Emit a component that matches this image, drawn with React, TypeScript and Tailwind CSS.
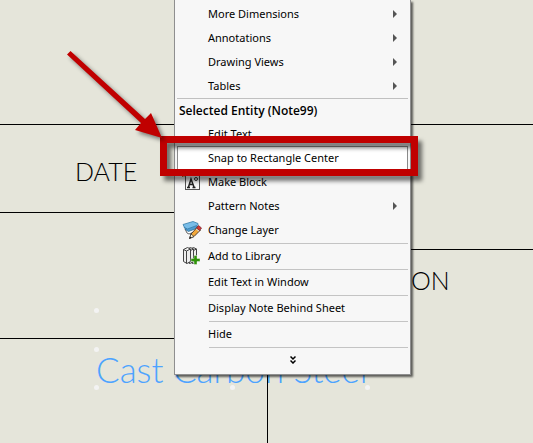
import type { ReactNode } from "react";

type Entry = {
  label: string;
  submenu?: boolean;
  icon?: ReactNode;
  divider?: boolean;
  active?: boolean;
};

const BlockIcon = () => (
  <svg width="20" height="20" viewBox="0 0 20 20" aria-hidden="true">
    <rect x="3.500" y="3.500" width="14" height="14" fill="#f7f7f7" stroke="#555" />
    <path d="M5 15.500h3M6.500 15L9 7L12 15M10.500 15.500h3M7.500 12.500h4" fill="none" stroke="#222" strokeWidth="1.500" />
    <circle cx="14" cy="7" r="1.500" fill="none" stroke="#333" />
    <path d="M0 1l2 2M5 1L3 3M0 5l2-2M2 0v5M0 3h5" stroke="#c06a28" />
  </svg>
);

const LayerIcon = () => (
  <svg width="20" height="20" viewBox="0 0 20 20" aria-hidden="true">
    <path d="M3 9L13 7.500L17 10L7 14L5 13Z" fill="#fff" stroke="#555" strokeWidth=".9" />
    <path d="M2 7L13 5L17 7.500L6.500 11.500L4 10Z" fill="#4d9bd0" stroke="#28678f" strokeWidth=".7" />
    <path d="M1 4.500L11 1.500L16 3.500L16 5L5.500 9L2.500 7.500Z" fill="#79bde8" stroke="#397da8" strokeWidth=".8" />
    <path d="M7.500 18.500L9 14L15 7.500L18.500 10L12 16.500Z" fill="#f2a83a" stroke="#3e302a" strokeWidth=".9" />
    <path d="M14.500 8L16.500 5.500L19.500 8L17.500 10.500Z" fill="#d63b30" stroke="#723" strokeWidth=".8" />
    <path d="M14 9L17 11" stroke="#ddd" />
    <path d="M7.500 18.500L9 14L12 16.500Z" fill="#fff1ce" stroke="#333" strokeWidth=".7" />
    <path d="M7.500 18.500L8.300 16.500L9.500 17.500Z" fill="#111" />
  </svg>
);

const LibraryIcon = () => (
  <svg width="20" height="20" viewBox="0 0 20 20" aria-hidden="true">
    {[7, 4, 1].map((x) => (
      <g key={x} transform={`translate(${x} 0)`}>
        <path d="M0.500 3.500L4.500 1.500L7.500 3V15.500L4 17.500L0.500 15.500Z" fill="#eee" stroke="#444" />
        <path d="M0.500 3.500L3.500 5L7.500 3M3.500 5V17.500" fill="none" stroke="#444" />
      </g>
    ))}
    <path d="M12 9.500H15V12.500H18V15.500H15V18.500H12V15.500H9V12.500H12Z" fill="#2f9209" stroke="#f7f7f7" strokeWidth=".4" />
  </svg>
);

const topEntries: Entry[] = [
  { label: "More Dimensions", submenu: true },
  { label: "Annotations", submenu: true },
  { label: "Drawing Views", submenu: true },
  { label: "Tables", submenu: true },
];

const entityEntries: Entry[] = [
  { label: "Edit Text" },
  { label: "Snap to Rectangle Center", active: true },
  { label: "Make Block", icon: <BlockIcon /> },
  { label: "Pattern Notes", submenu: true },
  { label: "Change Layer", icon: <LayerIcon />, divider: true },
  { label: "Add to Library", icon: <LibraryIcon />, divider: true },
  { label: "Edit Text in Window", divider: true },
  { label: "Display Note Behind Sheet", divider: true },
  { label: "Hide", divider: true },
];

function MenuItem({ label, submenu, icon, divider, active }: Entry) {
  return (
    <li>
      <button
        type="button"
        className={`flex h-6 w-full items-center pr-2.5 text-left ${
          active ? "border border-[#8a8a8a] bg-white" : "border border-transparent"
        }`}
      >
        <span className="flex w-[30px] shrink-0 justify-start pl-1">{icon}</span>
        <span className="grow whitespace-nowrap">{label}</span>
        {submenu && (
          <svg width="4" height="8" viewBox="0 0 4 8" aria-hidden="true">
            <path d="M0 0L4 4L0 8Z" fill="#555" />
          </svg>
        )}
      </button>
      {divider && <hr className="mt-px ml-8 border-[#c4c4c4]" />}
    </li>
  );
}

function ContextMenu() {
  return (
    <nav
      aria-label="Context menu"
      className="absolute top-0 left-[174px] w-[237px] border border-t-0 border-[#8f8f8f] bg-[#f7f7f7] px-0.5 py-0.5 font-['Noto_Sans','Open_Sans',sans-serif] text-[11px] font-normal text-black shadow-[2px_2px_2px_#0009]"
    >
      <ul>{topEntries.map((entry) => <MenuItem key={entry.label} {...entry} />)}</ul>
      <h2 className="flex h-6 items-center border-t border-[#c0c0c0] pl-0.5 font-['Open_Sans','Noto_Sans',sans-serif] text-xs font-semibold">Selected Entity (Note99)</h2>
      <ul>{entityEntries.map((entry) => <MenuItem key={entry.label} {...entry} />)}</ul>
      <button type="button" aria-label="Show more" className="flex h-6 w-full items-center justify-center">
        <svg width="6" height="8" viewBox="0 0 6 8" fill="none" stroke="#000" strokeWidth="1.500" aria-hidden="true">
          <path d="M.5 .5L3 3L5.500 .5M.5 4.500L3 7L5.500 4.500" />
        </svg>
      </button>
    </nav>
  );
}

function TitleBlock() {
  return (
    <div className="flex min-h-[443px] text-[25px]">
      <div className="flex w-[267px] shrink-0 flex-col">
        <div className="h-[125px] border-b border-black" />
        <div className="h-[88px] border-b border-black pt-[30px] pl-[75px] leading-8">DATE</div>
        <div className="h-[126px] border-b border-black" />
        <p className="pt-2.5 pl-24 text-[35px] leading-10 whitespace-nowrap text-[#4da3ff]">Cast Carbon Steel</p>
      </div>
      <div className="flex grow flex-col">
        <div className="h-[125px] border-b border-black" />
        <div className="h-[125px] border-b border-black" />
        <div className="grow border-l border-black pt-3.5 pl-[143px] leading-8">ON</div>
      </div>
    </div>
  );
}

export default function App() {
  return (
    <main className="relative min-h-screen overflow-hidden bg-[#e5e5da] font-['Lato',sans-serif] font-light">
      <TitleBlock />
      <svg className="absolute inset-0" width="533" height="443" viewBox="0 0 533 443" fill="#f3f3f3" aria-hidden="true">
        <circle cx="96.500" cy="310.500" r="2.500" />
        <circle cx="96.500" cy="349.500" r="2.500" />
        <circle cx="96.500" cy="387.500" r="2.500" />
        <circle cx="232.500" cy="387.500" r="2.500" />
        <circle cx="367.500" cy="387.500" r="2.500" />
      </svg>

      <ContextMenu />

      <div className="pointer-events-none absolute top-[136px] left-[160px] h-10 w-[258px] border-[7px] border-[#c00000] drop-shadow-[4px_5px_2px_#0008]" />
      <svg className="pointer-events-none absolute inset-0 drop-shadow-[3px_3px_2px_#0007]" width="533" height="443" viewBox="0 0 533 443" aria-hidden="true">
        <path d="M70.500 51L145 119L151 113L162 138L135 130L141 123L67 54.500Z" fill="#c00000" />
      </svg>
    </main>
  );
}
